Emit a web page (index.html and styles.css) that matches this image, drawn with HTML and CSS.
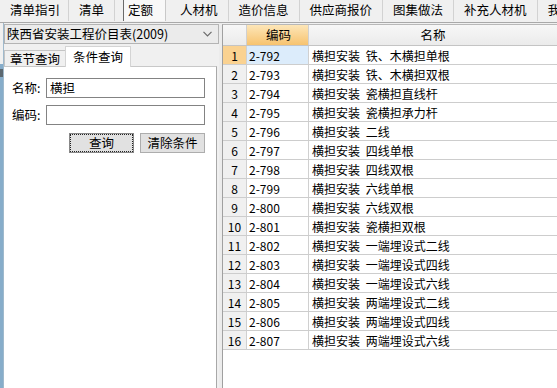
FILE: index.html
```html
<!DOCTYPE html>
<html lang="zh-CN">
<head>
<meta charset="utf-8">
<title>定额查询</title>
<link rel="stylesheet" href="styles.css">
</head>
<body>
<div class="app">
  <div class="tabbar">
    <div class="tab first">清单指引</div>
    <div class="tab">清单</div>
    <div class="tab active">定额</div>
    <div class="tab">人材机</div>
    <div class="tab">造价信息</div>
    <div class="tab">供应商报价</div>
    <div class="tab">图集做法</div>
    <div class="tab">补充人材机</div>
    <div class="tab">我</div>
  </div>
  <div class="main">
    <div class="edge"><span class="edge-mark"></span></div>
    <div class="left">
      <div class="combo">
        <span class="combo-text">陕西省安装工程价目表(2009)</span>
        <svg class="chev" width="9" height="6" viewBox="0 0 9 6"><path d="M0.5 0.8 L4.5 4.8 L8.5 0.8" fill="none" stroke="#6a6a6a" stroke-width="1.2"/></svg>
      </div>
      <div class="subtabs">
        <div class="subtab">章节查询</div>
        <div class="subtab on">条件查询</div>
      </div>
      <div class="panel">
        <div class="field"><span class="label">名称:</span><div class="input">横担</div></div>
        <div class="field"><span class="label">编码:</span><div class="input"></div></div>
        <div class="buttons">
          <button class="btn focused">查询</button>
          <button class="btn">清除条件</button>
        </div>
      </div>
    </div>
    <div class="splitter"></div>
    <div class="grid">
      <div class="row head">
        <div class="cell num"></div>
        <div class="cell code sel-head">编码</div>
        <div class="cell name center">名称</div>
      </div>
      <div class="row selected"><div class="cell num">1</div><div class="cell code">2-792</div><div class="cell name">横担安装 铁、木横担单根</div></div>
      <div class="row"><div class="cell num">2</div><div class="cell code">2-793</div><div class="cell name">横担安装 铁、木横担双根</div></div>
      <div class="row"><div class="cell num">3</div><div class="cell code">2-794</div><div class="cell name">横担安装 瓷横担直线杆</div></div>
      <div class="row"><div class="cell num">4</div><div class="cell code">2-795</div><div class="cell name">横担安装 瓷横担承力杆</div></div>
      <div class="row"><div class="cell num">5</div><div class="cell code">2-796</div><div class="cell name">横担安装 二线</div></div>
      <div class="row"><div class="cell num">6</div><div class="cell code">2-797</div><div class="cell name">横担安装 四线单根</div></div>
      <div class="row"><div class="cell num">7</div><div class="cell code">2-798</div><div class="cell name">横担安装 四线双根</div></div>
      <div class="row"><div class="cell num">8</div><div class="cell code">2-799</div><div class="cell name">横担安装 六线单根</div></div>
      <div class="row"><div class="cell num">9</div><div class="cell code">2-800</div><div class="cell name">横担安装 六线双根</div></div>
      <div class="row"><div class="cell num">10</div><div class="cell code">2-801</div><div class="cell name">横担安装 瓷横担双根</div></div>
      <div class="row"><div class="cell num">11</div><div class="cell code">2-802</div><div class="cell name">横担安装 一端埋设式二线</div></div>
      <div class="row"><div class="cell num">12</div><div class="cell code">2-803</div><div class="cell name">横担安装 一端埋设式四线</div></div>
      <div class="row"><div class="cell num">13</div><div class="cell code">2-804</div><div class="cell name">横担安装 一端埋设式六线</div></div>
      <div class="row"><div class="cell num">14</div><div class="cell code">2-805</div><div class="cell name">横担安装 两端埋设式二线</div></div>
      <div class="row"><div class="cell num">15</div><div class="cell code">2-806</div><div class="cell name">横担安装 两端埋设式四线</div></div>
      <div class="row"><div class="cell num">16</div><div class="cell code">2-807</div><div class="cell name">横担安装 两端埋设式六线</div></div>
    </div>
  </div>
</div>
</body>
</html>
```

FILE: styles.css
```css
* { box-sizing: border-box; }
html, body { margin: 0; padding: 0; }
body {
  width: 557px;
  height: 388px;
  overflow: hidden;
  background: #f0f0f0;
  color: #000;
  font-family: "Noto Sans CJK SC", "Liberation Sans", sans-serif;
  font-size: 12px;
  line-height: 1;
}
.app { width: 557px; height: 388px; display: flex; flex-direction: column; }

/* top tabs */
.tabbar {
  display: flex;
  height: 23px;
  flex: none;
  border-bottom: 1px solid #a9a9a9;
  background: #f0f0f0;
  overflow: hidden;
}
.tab {
  padding: 0 10px;
  line-height: 20px;
  font-size: 12.5px;
  white-space: nowrap;
  border-right: 1px solid #d2d2d2;
  height: 21px;
}
.tab.first { padding-left: 10px; padding-right: 8px; }
.tab.active {
  margin-left: 8px;
  padding: 0 12px 0 4px;
  background: #f8f8f8;
  border-left: 1px solid #6a6a6a;
  border-right: 1px solid #c8c8c8;
  margin-right: 4px;
}

/* main */
.main { flex: 1; display: flex; min-height: 0; }
.edge {
  width: 4px;
  flex: none;
  overflow: hidden;
  background: linear-gradient(to bottom, #f0f0f0 0 41px, #87adca 41px);
  border-right: 1px solid #9fb9cc;
  padding-top: 46px;
}
.edge-mark { display: block; width: 3px; height: 8px; background: #4a4a4a; opacity: 0.7; }

.left { width: 215px; flex: none; display: flex; flex-direction: column; }
.combo {
  margin-top: 1px;
  height: 20px;
  border: 1px solid #b4b4b4;
  background: #ebebeb;
  display: flex;
  align-items: center;
  justify-content: space-between;
  padding: 0 6px 0 2px;
  font-size: 12.5px;
}
.chev { flex: none; }

.subtabs { display: flex; align-items: flex-end; height: 22px; flex: none; }
.subtab {
  height: 16px;
  line-height: 15px;
  padding: 0 5px;
  border: 1px solid #c4c4c4;
  border-bottom: none;
  background: #f0f0f0;
  font-size: 12.5px;
}
.subtab.on {
  position: relative;
  z-index: 1;
  height: 21px;
  line-height: 19px;
  margin-left: -1px;
  margin-bottom: -1px;
  padding: 0 7px;
  background: #fff;
  border-color: #d4d4d4;
}
.panel {
  flex: 1;
  margin-right: 2px;
  background: #fff;
  border-top: 1px solid #c8c8c8;
  border-right: 1px solid #a8a8a8;
  padding-top: 11px;
}
.field { display: flex; align-items: center; margin-left: 8px; }
.field + .field { margin-top: 7px; }
.label { width: 34px; font-size: 12.5px; }
.input {
  width: 159px;
  height: 20px;
  border: 1px solid #838383;
  background: #fff;
  padding-left: 3px;
  line-height: 18px;
  font-size: 12.5px;
}
.buttons { display: flex; gap: 6px; margin: 8px 0 0 65px; }
.btn {
  width: 65px;
  height: 20px;
  padding: 0;
  border: 1px solid #adadad;
  background: #e1e1e1;
  font-family: inherit;
  font-size: 12.5px;
  line-height: 18px;
  color: #000;
}
.btn.focused { border-color: #888; outline: 1px dotted #222; outline-offset: -2px; }

.splitter { width: 3px; flex: none; background: #ececec; }

/* grid */
.grid {
  flex: 1;
  margin-top: 1px;
  background: #fff;
  border-left: 1px solid #a0a0a0;
  border-top: 1px solid #b8b8b8;
}
.row {
  display: grid;
  grid-template-columns: 24px 62px 1fr;
  height: 19px;
  border-bottom: 1px solid #cdcdcd;
}
.row.head { height: 21px; border-bottom-color: #c4c4c4; }
.cell {
  border-right: 1px solid #d0d0d0;
  white-space: nowrap;
  overflow: hidden;
  line-height: 19px;
  font-size: 12px;
}
.row.head .cell { line-height: 20px; background: linear-gradient(#f7f7f7, #ebebeb); font-size: 12.5px; }
.row.head .cell.sel-head { background: linear-gradient(#fde6b8, #f7c36f); text-align: center; }
.cell.name { border-right: none; padding-left: 3px; word-spacing: 3px; }
.cell.center { text-align: center; padding-left: 0; }
.cell.num { text-align: center; background: #f0f0f0; }
.cell.code { padding-left: 2px; }
.row.selected .cell.num { background: #fad291; }
.row.selected .cell.code { background: #dcecfb; }
```
